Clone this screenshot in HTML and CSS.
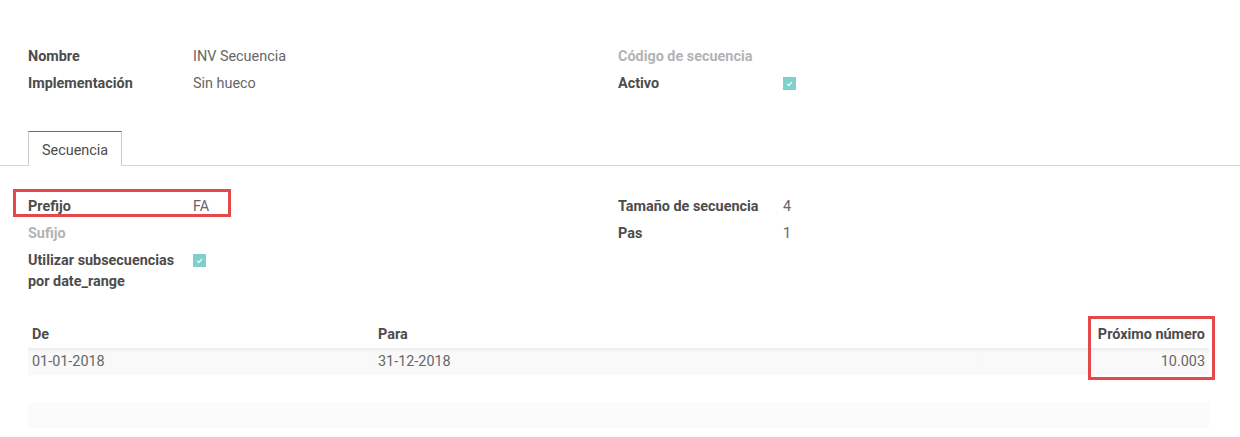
FILE: index.html
```html
<!DOCTYPE html>
<html lang="es">
<head>
<meta charset="utf-8">
<title>Secuencia</title>
<link rel="stylesheet" href="styles.css">
</head>
<body>
<div class="sheet">
  <div class="cols top">
    <div class="group">
      <div class="field"><span class="label">Nombre</span><span class="value">INV Secuencia</span></div>
      <div class="field"><span class="label">Implementación</span><span class="value">Sin hueco</span></div>
    </div>
    <div class="group">
      <div class="field"><span class="label empty">Código de secuencia</span><span class="value"></span></div>
      <div class="field"><span class="label">Activo</span><span class="value"><span class="check"><svg viewBox="0 0 13 13" width="13" height="13"><path d="M4 6.8 L5.8 8.4 L9 5" fill="none" stroke="#eafaf8" stroke-width="1.4"/></svg></span></span></div>
    </div>
  </div>
</div>

<div class="tabs">
  <div class="tab">Secuencia</div>
</div>

<div class="sheet">
  <div class="cols content">
    <div class="group">
      <div class="field highlight"><span class="label">Prefijo</span><span class="value">FA</span></div>
      <div class="field"><span class="label empty">Sufijo</span><span class="value"></span></div>
      <div class="field multi"><span class="label">Utilizar subsecuencias por date_range</span><span class="value"><span class="check"><svg viewBox="0 0 13 13" width="13" height="13"><path d="M4 6.8 L5.8 8.4 L9 5" fill="none" stroke="#eafaf8" stroke-width="1.4"/></svg></span></span></div>
    </div>
    <div class="group">
      <div class="field"><span class="label">Tamaño de secuencia</span><span class="value">4</span></div>
      <div class="field"><span class="label">Pas</span><span class="value">1</span></div>
    </div>
  </div>

  <div class="list">
    <table class="table">
      <thead>
        <tr><th class="c-de">De</th><th class="c-para">Para</th><th class="num">Próximo número</th></tr>
      </thead>
      <tbody>
        <tr class="data"><td>01-01-2018</td><td>31-12-2018</td><td class="num">10.003</td></tr>
        <tr class="blank"><td></td><td></td><td></td></tr>
      </tbody>
      <tfoot>
        <tr><td></td><td></td><td></td></tr>
      </tfoot>
    </table>
    <div class="mark"></div>
  </div>
</div>
</body>
</html>
```
FILE: styles.css
```css
html, body {
  margin: 0;
  padding: 0;
  background: #ffffff;
}
body {
  font-family: Roboto, "Noto Sans", sans-serif;
  font-size: 14.4px;
  color: #4c4c4c;
  width: 1240px;
  height: 437px;
  overflow: hidden;
}
.sheet {
  padding: 0 31px 0 28px;
}
.cols {
  display: grid;
  grid-template-columns: 590px 1fr;
}
.cols.top {
  padding-top: 43px;
}
.cols.content {
  padding-top: 27px;
}
.field {
  display: grid;
  grid-template-columns: 165px 1fr;
  align-items: center;
  min-height: 27px;
  line-height: 21px;
}
.field.multi {
  align-items: start;
  padding: 3px 0;
}
.field.multi .label {
  width: 150px;
}
.label {
  font-weight: 700;
  color: #4c4c4c;
}
.label.empty {
  color: #b3b3b3;
}
.value {
  color: #666666;
}
.check {
  display: inline-flex;
  width: 13px;
  height: 13px;
  background: #7fcfca;
  vertical-align: middle;
  margin-top: -2px;
}
.field.multi .check {
  margin-top: 4px;
  display: flex;
}
.field.highlight {
  position: relative;
}
.field.highlight::after {
  content: "";
  position: absolute;
  left: -15px;
  top: -4px;
  width: 212px;
  height: 22px;
  border: 3px solid #e5484a;
}
.tabs {
  margin-top: 34px;
  padding-left: 28px;
  border-bottom: 1px solid #d6d6d6;
  display: flex;
}
.tab {
  height: 34px;
  line-height: 37px;
  padding: 0 13px;
  border: 1px solid #cccccc;
  border-top: 1px solid #875a7b;
  border-bottom: none;
  margin-bottom: -1px;
  background: #ffffff;
  color: #4c4c4c;
}
.list {
  position: relative;
  margin-top: 26px;
}
.table {
  width: 1181px;
  border-collapse: collapse;
}
.table th, .table td {
  height: 27px;
  padding: 0 4px;
  text-align: left;
  vertical-align: middle;
}
.table th {
  font-weight: 700;
  color: #4c4c4c;
}
.c-de {
  width: 338px;
}
.c-para {
  width: 600px;
}
.table .num {
  text-align: right;
}
.table td {
  color: #666666;
}
.table tr.data td {
  background: #f9f9f9;
  box-shadow: inset 0 4px 4px -3px rgba(0, 0, 0, 0.08);
}
.table tfoot td {
  background: #fbfbfb;
  height: 26px;
}
.mark {
  position: absolute;
  left: 1060px;
  top: -5px;
  width: 121px;
  height: 58px;
  border: 3px solid #e5484a;
}
```
